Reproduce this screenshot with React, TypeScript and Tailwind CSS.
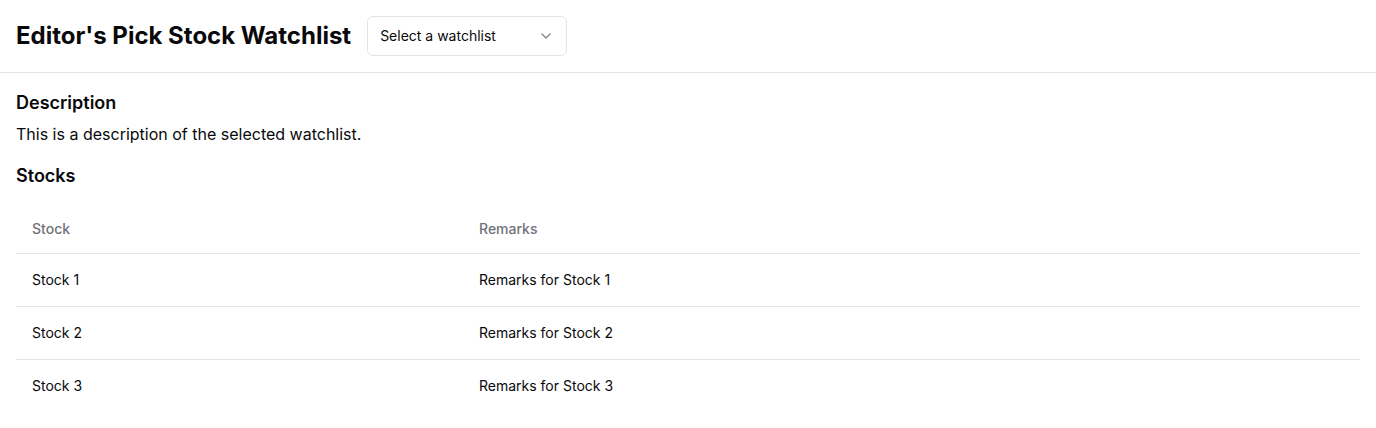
import React from "react";
import { ChevronDown } from "lucide-react";

const rows = [1, 2, 3];

export default function App() {
  return (
    <div className="min-h-screen bg-white text-[#09090b]" style={{ fontFamily: "Inter, 'Noto Sans', sans-serif" }}>
      <header className="flex items-center gap-4 p-4 border-b border-[#e4e4e7]">
        <h1 className="text-2xl font-bold">Editor's Pick Stock Watchlist</h1>
        <button className="flex h-10 w-[200px] items-center justify-between rounded-md border border-[#e4e4e7] bg-white px-3 text-sm">
          <span>Select a watchlist</span>
          <ChevronDown className="h-4 w-4 opacity-50" />
        </button>
      </header>
      <main className="p-4">
        <h2 className="text-lg font-semibold mb-[5px]">Description</h2>
        <p className="text-base mb-4">This is a description of the selected watchlist.</p>
        <h2 className="text-lg font-semibold mb-[15px]">Stocks</h2>
        <table className="w-full text-sm">
          <thead>
            <tr className="border-b border-[#e4e4e7]">
              <th className="h-12 w-[447px] px-4 text-left font-medium text-[#71717a]">Stock</th>
              <th className="h-12 px-4 text-left font-medium text-[#71717a]">Remarks</th>
            </tr>
          </thead>
          <tbody>
            {rows.map((i) => (
              <tr key={i} className="border-b border-[#e4e4e7] last:border-0">
                <td className="p-4">Stock {i}</td>
                <td className="p-4">Remarks for Stock {i}</td>
              </tr>
            ))}
          </tbody>
        </table>
      </main>
    </div>
  );
}
